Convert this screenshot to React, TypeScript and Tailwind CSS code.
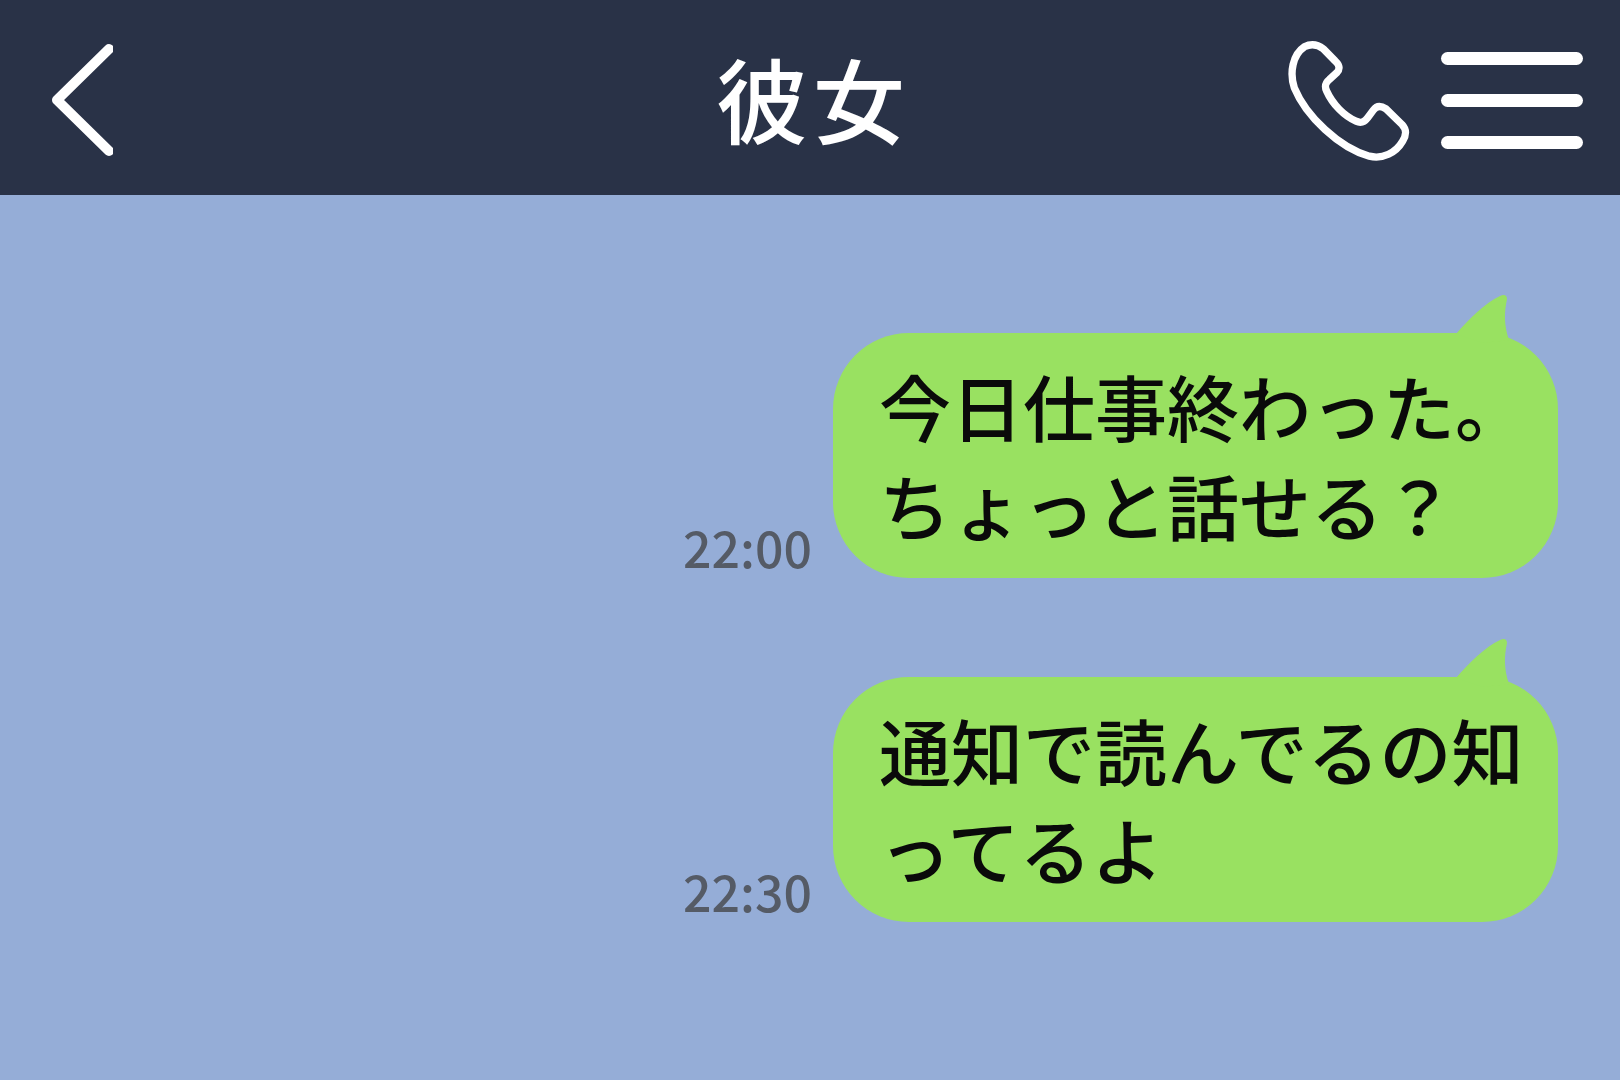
const jp = "font-['Noto_Sans_CJK_JP','Noto_Sans',sans-serif]";

function Bubble({ time, lines }: { time: string; lines: string[] }) {
  return (
    <div className="flex items-end gap-[21px]">
      <span className={`${jp} mb-[2px] text-[50px] font-medium leading-[60px] text-[#555b66]`}>{time}</span>
      <div className="relative h-[245px] w-[725px] rounded-[76px] bg-[#99e161] pl-[46px] pt-[22px]">
        <svg className="absolute left-[620px] top-[-40px]" width="60" height="50" viewBox="0 0 60 50">
          <path d="M3 41 C16 26 32 10 47 3 C51 1 54 2 54 6 C51 20 51 32 56 47 L30 50 Z" fill="#99e161" />
        </svg>
        {lines.map((l) => (
          <div key={l} className={`${jp} relative whitespace-nowrap text-[72px] font-medium leading-[99px] text-[#0a0a0a]`}>{l}</div>
        ))}
      </div>
    </div>
  );
}

export default function App() {
  return (
    <div className="flex h-[1080px] w-[1620px] flex-col overflow-hidden bg-[#95add7]">
      <header className="grid h-[195px] shrink-0 grid-cols-[1fr_auto_1fr] items-center bg-[#293247] pl-[51px] pr-[37px]">
        <svg width="62" height="112" viewBox="0 0 62 112" fill="none" stroke="white" strokeWidth="10" strokeLinecap="round" strokeLinejoin="round" className="mt-[5px]">
          <path d="M58 5 L6 56 L58 107" />
        </svg>
        <div className={`${jp} mr-[8px] mt-[-3px] text-[92px] font-medium leading-[195px] tracking-[5px] text-white`}>彼女</div>
        <div className="flex items-center justify-end gap-[31px]">
          <svg width="124" height="123" viewBox="110 65 372 368" fill="none" stroke="white" strokeWidth="22" strokeLinejoin="round" className="mt-[10px]">
            <path d="M165 82 C185 72 205 75 222 88 L258 125 C272 138 272 150 262 160 L240 180 C228 190 225 200 232 215 C250 255 285 290 320 305 C335 312 345 308 355 295 L372 272 C382 258 395 258 410 268 L458 315 C472 330 472 345 460 365 C440 400 400 420 360 410 C270 385 170 290 135 205 C120 160 130 105 165 82 Z" />
          </svg>
          <div className="mt-[6px] flex w-[142px] flex-col gap-[29px]">
            <div className="h-[13px] rounded-full bg-white" />
            <div className="h-[13px] rounded-full bg-white" />
            <div className="h-[13px] rounded-full bg-white" />
          </div>
        </div>
      </header>
      <main className="flex flex-col items-end gap-[99px] pr-[62px] pt-[138px]">
        <Bubble time="22:00" lines={["今日仕事終わった。", "ちょっと話せる？"]} />
        <Bubble time="22:30" lines={["通知で読んでるの知", "ってるよ"]} />
      </main>
    </div>
  );
}
